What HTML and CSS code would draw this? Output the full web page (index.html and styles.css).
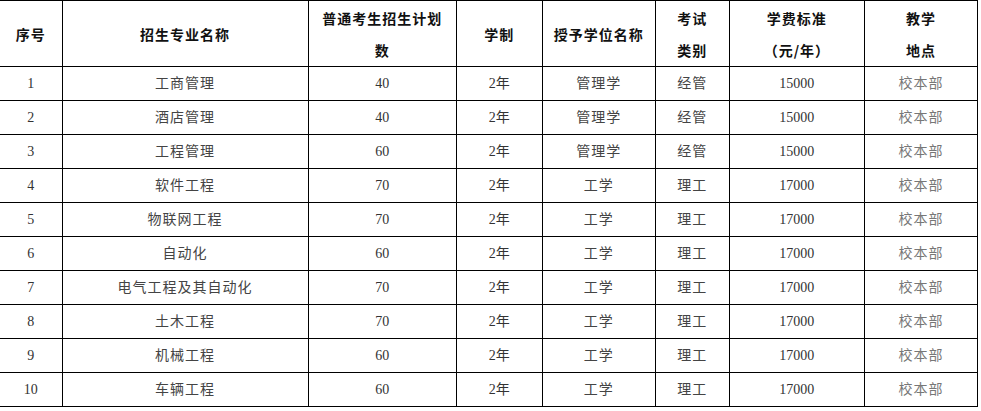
FILE: index.html
```html
<!DOCTYPE html>
<html lang="zh-CN">
<head>
<meta charset="utf-8">
<title>招生专业</title>
<link rel="stylesheet" href="styles.css">
</head>
<body>
<table class="plan">
  <colgroup>
    <col class="c1"><col class="c2"><col class="c3"><col class="c4"><col class="c5"><col class="c6"><col class="c7"><col class="c8">
  </colgroup>
  <thead>
    <tr class="head">
      <th>序号</th>
      <th>招生专业名称</th>
      <th>普通考生招生计划<br>数</th>
      <th>学制</th>
      <th>授予学位名称</th>
      <th>考试<br>类别</th>
      <th>学费标准<br>（元/年）</th>
      <th>教学<br>地点</th>
    </tr>
  </thead>
  <tbody>
    <tr><td>1</td><td>工商管理</td><td>40</td><td>2年</td><td>管理学</td><td>经管</td><td>15000</td><td class="loc">校本部</td></tr>
    <tr><td>2</td><td>酒店管理</td><td>40</td><td>2年</td><td>管理学</td><td>经管</td><td>15000</td><td class="loc">校本部</td></tr>
    <tr><td>3</td><td>工程管理</td><td>60</td><td>2年</td><td>管理学</td><td>经管</td><td>15000</td><td class="loc">校本部</td></tr>
    <tr><td>4</td><td>软件工程</td><td>70</td><td>2年</td><td>工学</td><td>理工</td><td>17000</td><td class="loc">校本部</td></tr>
    <tr><td>5</td><td>物联网工程</td><td>70</td><td>2年</td><td>工学</td><td>理工</td><td>17000</td><td class="loc">校本部</td></tr>
    <tr><td>6</td><td>自动化</td><td>60</td><td>2年</td><td>工学</td><td>理工</td><td>17000</td><td class="loc">校本部</td></tr>
    <tr><td>7</td><td>电气工程及其自动化</td><td>70</td><td>2年</td><td>工学</td><td>理工</td><td>17000</td><td class="loc">校本部</td></tr>
    <tr><td>8</td><td>土木工程</td><td>70</td><td>2年</td><td>工学</td><td>理工</td><td>17000</td><td class="loc">校本部</td></tr>
    <tr><td>9</td><td>机械工程</td><td>60</td><td>2年</td><td>工学</td><td>理工</td><td>17000</td><td class="loc">校本部</td></tr>
    <tr><td>10</td><td>车辆工程</td><td>60</td><td>2年</td><td>工学</td><td>理工</td><td>17000</td><td class="loc">校本部</td></tr>
  </tbody>
</table>
</body>
</html>
```

FILE: styles.css
```css
html, body {
  margin: 0;
  padding: 0;
  background: #fff;
}

body {
  font-family: "Liberation Serif", "Noto Sans CJK SC", serif;
  color: #333;
}

.plan {
  border-collapse: collapse;
  table-layout: fixed;
  width: 978px;
}

.c1 { width: 62px; }
.c2 { width: 246px; }
.c3 { width: 148px; }
.c4 { width: 86px; }
.c5 { width: 113px; }
.c6 { width: 74px; }
.c7 { width: 135px; }
.c8 { width: 113px; }

.plan th,
.plan td {
  border: 1px solid #000;
  padding: 0;
  text-align: center;
  vertical-align: middle;
}

.plan tr > :first-child {
  border-left: none;
}

.head {
  height: 66px;
}

.plan th {
  font-family: "Noto Sans CJK SC", sans-serif;
  font-weight: 700;
  font-size: 14px;
  letter-spacing: 1px;
  line-height: 32px;
  color: #111;
}

.plan tbody tr {
  height: 34px;
}

.plan td {
  font-size: 14px;
  line-height: 20px;
  color: #333;
}

.plan td:nth-child(2),
.plan td:nth-child(5),
.plan td:nth-child(6),
.plan td:nth-child(8) {
  letter-spacing: 1px;
  color: #444;
}

.plan td.loc {
  color: #777;
}
```
